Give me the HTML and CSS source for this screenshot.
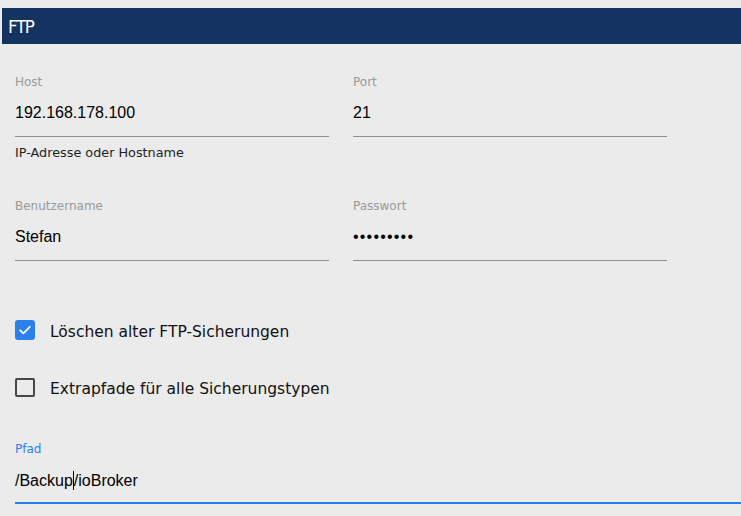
FILE: index.html
```html
<!DOCTYPE html>
<html lang="de">
<head>
<meta charset="utf-8">
<title>FTP</title>
<link rel="stylesheet" href="styles.css">
</head>
<body>
<div class="header"><span class="header-title">FTP</span></div>
<div class="form">
  <div class="row row-first">
    <div class="col">
      <div class="field">
        <div class="label">Host</div>
        <div class="value">192.168.178.100</div>
      </div>
      <div class="helper">IP-Adresse oder Hostname</div>
    </div>
    <div class="col">
      <div class="field">
        <div class="label">Port</div>
        <div class="value">21</div>
      </div>
    </div>
  </div>
  <div class="row row-second">
    <div class="col">
      <div class="field">
        <div class="label">Benutzername</div>
        <div class="value">Stefan</div>
      </div>
    </div>
    <div class="col">
      <div class="field">
        <div class="label">Passwort</div>
        <div class="value dots">•••••••••</div>
      </div>
    </div>
  </div>
  <div class="check check-first">
    <span class="box box-on">
      <svg width="20" height="20" viewBox="0 0 20 20"><path d="M5.2 10.3 L8.4 13.4 L14.8 6.8" fill="none" stroke="#fff" stroke-width="1.8" stroke-linecap="round" stroke-linejoin="round"/></svg>
    </span>
    <span class="check-label">Löschen alter FTP-Sicherungen</span>
  </div>
  <div class="check check-second">
    <span class="box box-off"></span>
    <span class="check-label">Extrapfade für alle Sicherungstypen</span>
  </div>
  <div class="field field-focus">
    <div class="label label-focus">Pfad</div>
    <div class="value">/Backup<span class="caret"></span>/ioBroker</div>
  </div>
</div>
</body>
</html>
```
FILE: styles.css
```css
html, body {
  margin: 0;
  padding: 0;
  background: #ebebeb;
  overflow: hidden;
}
body {
  width: 741px;
  height: 516px;
}
.header {
  margin: 8px 0 0 2px;
  height: 36px;
  background: #133360;
  display: flex;
  align-items: center;
  padding-left: 6px;
}
.header-title {
  color: #ffffff;
  font-family: "DejaVu Sans Condensed", "DejaVu Sans", sans-serif;
  font-size: 18.5px;
  letter-spacing: -1.3px;
  line-height: 20px;
  margin-top: 1px;
}
.form {
  padding-left: 15px;
}
.row {
  display: flex;
  gap: 24px;
}
.row-first {
  margin-top: 31px;
  height: 85px;
}
.row-second {
  margin-top: 39px;
}
.col {
  width: 314px;
}
.field {
  border-bottom: 1px solid #8f8f8f;
  padding-bottom: 13px;
}
.label {
  font-family: "DejaVu Sans", sans-serif;
  font-size: 12px;
  line-height: 14px;
  color: #9a9a9a;
  margin-bottom: 14px;
}
.value {
  font-family: "Liberation Sans", Arial, sans-serif;
  font-size: 16px;
  line-height: 20px;
  color: #000;
}
.dots {
  letter-spacing: 1.2px;
  font-size: 16px;
}
.helper {
  margin-top: 8px;
  font-family: "DejaVu Sans", sans-serif;
  font-size: 12.8px;
  line-height: 15px;
  color: #1e1e1e;
}
.check {
  display: flex;
  align-items: center;
  height: 20px;
}
.check-first {
  margin-top: 59px;
}
.check-second {
  margin-top: 37px;
}
.box {
  width: 20px;
  height: 20px;
  box-sizing: border-box;
  border-radius: 3px;
  flex: none;
  display: flex;
}
.box-on {
  background: #2b80ee;
}
.box-off {
  border: 2px solid #474747;
  height: 19px;
  border-radius: 2px;
}
.check-label {
  margin-left: 15px;
  font-family: "DejaVu Sans", sans-serif;
  font-size: 15.5px;
  line-height: 20px;
  color: #111;
  margin-top: 3px;
}
.field-focus {
  margin-top: 45px;
  border-bottom: 2px solid #2680eb;
  padding-bottom: 11px;
}
.label-focus {
  color: #2a80ea;
  margin-bottom: 15px;
}
.caret {
  display: inline-block;
  width: 0;
  height: 19px;
  border-left: 1px solid #000;
  vertical-align: -4px;
}
```
